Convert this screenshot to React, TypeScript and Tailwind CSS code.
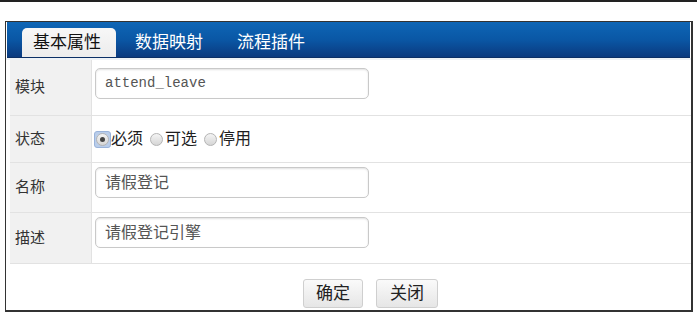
const font = { fontFamily: '"Liberation Sans", "Noto Sans CJK SC", sans-serif' };

const Radio = ({ checked, label }: { checked?: boolean; label: string }) => (
  <label className="flex items-center">
    <span
      className={
        checked
          ? "w-[17px] h-[17px] flex items-center justify-center rounded-[3px] bg-[#b9cdea] border border-[#9ab3da]"
          : "w-[17px] h-[17px] flex items-center justify-center"
      }
    >
      <span className="w-[13px] h-[13px] rounded-full border border-[#b4b4b4] bg-gradient-to-b from-[#f4f4f4] to-[#d6d6d6] flex items-center justify-center">
        {checked && <span className="w-[5px] h-[5px] rounded-full bg-[#444]" />}
      </span>
    </span>
    <span className="text-[16px] text-[#1e1e1e] leading-none">{label}</span>
  </label>
);

const Field = ({ value, mono }: { value: string; mono?: boolean }) => (
  <div
    className={
      "w-[274px] h-[31px] rounded-[5px] border border-[#c9c9c9] bg-white shadow-[inset_0_1px_2px_rgba(0,0,0,0.12)] flex items-center pl-[9px] text-[#555] " +
      (mono ? "text-[14px]" : "text-[16px]")
    }
    style={mono ? { fontFamily: '"Liberation Mono", monospace' } : undefined}
  >
    {value}
  </div>
);

const Row = ({
  label,
  h,
  pt,
  center,
  children,
}: {
  label: string;
  h: string;
  pt: string;
  center?: boolean;
  children: React.ReactNode;
}) => (
  <div className={"flex border-b border-[#e2e2e2] " + h}>
    <div className="w-[82px] shrink-0 bg-[#f1f1f1] border-r border-[#e2e2e2] flex items-center pl-[5px] text-[15px] text-[#333]">
      {label}
    </div>
    <div className={"flex-1 pl-[3px] flex " + (center ? "items-center " : "items-start ") + pt}>{children}</div>
  </div>
);

export default function App() {
  return (
    <div className="w-[697px] h-[313px] bg-white overflow-hidden" style={font}>
      <div className="h-[2px] bg-[#222]" />
      <div className="mt-[19px] ml-[5px] w-[688px] h-[291px] border border-[#333] border-b-2 border-r-2 flex flex-col">
        <div className="mx-[1px] h-[36px] bg-gradient-to-b from-[#0e66b6] via-[#0a57a5] to-[#0a3a7f] flex items-end pl-[15px] gap-[8px] border-b border-[#0a2f66]">
          <div className="w-[94px] h-[29px] rounded-t-[5px] bg-gradient-to-b from-[#f7f7f7] to-[#ececec] text-[#111] text-[17px] pl-[11px] flex items-center">
            基本属性
          </div>
          <div className="w-[94px] h-[29px] text-white text-[17px] pl-[11px] flex items-center">数据映射</div>
          <div className="w-[94px] h-[29px] text-white text-[17px] pl-[11px] flex items-center">流程插件</div>
        </div>
        <div className="h-[2px] bg-[#eef2f6]" />
        <div className="ml-[4px] flex flex-col">
          <Row label="模块" h="h-[56px]" pt="pt-[8px]">
            <Field value="attend_leave" mono />
          </Row>
          <Row label="状态" h="h-[47px]" pt="" center>
            <div className="flex items-center gap-[5px] -ml-[1px]">
              <Radio checked label="必须" />
              <Radio label="可选" />
              <Radio label="停用" />
            </div>
          </Row>
          <Row label="名称" h="h-[50px]" pt="pt-[4px]">
            <Field value="请假登记" />
          </Row>
          <Row label="描述" h="h-[51px]" pt="pt-[4px]">
            <Field value="请假登记引擎" />
          </Row>
        </div>
        <div className="flex gap-[13px] pl-[297px] pt-[15px]">
          <button className="w-[60px] h-[29px] rounded-[3px] border border-[#cfcfcf] bg-gradient-to-b from-[#fafafa] to-[#e6e6e6] text-[17px] text-[#222]">
            确定
          </button>
          <button className="w-[62px] h-[29px] rounded-[3px] border border-[#cfcfcf] bg-gradient-to-b from-[#fafafa] to-[#e6e6e6] text-[17px] text-[#222]">
            关闭
          </button>
        </div>
      </div>
    </div>
  );
}
